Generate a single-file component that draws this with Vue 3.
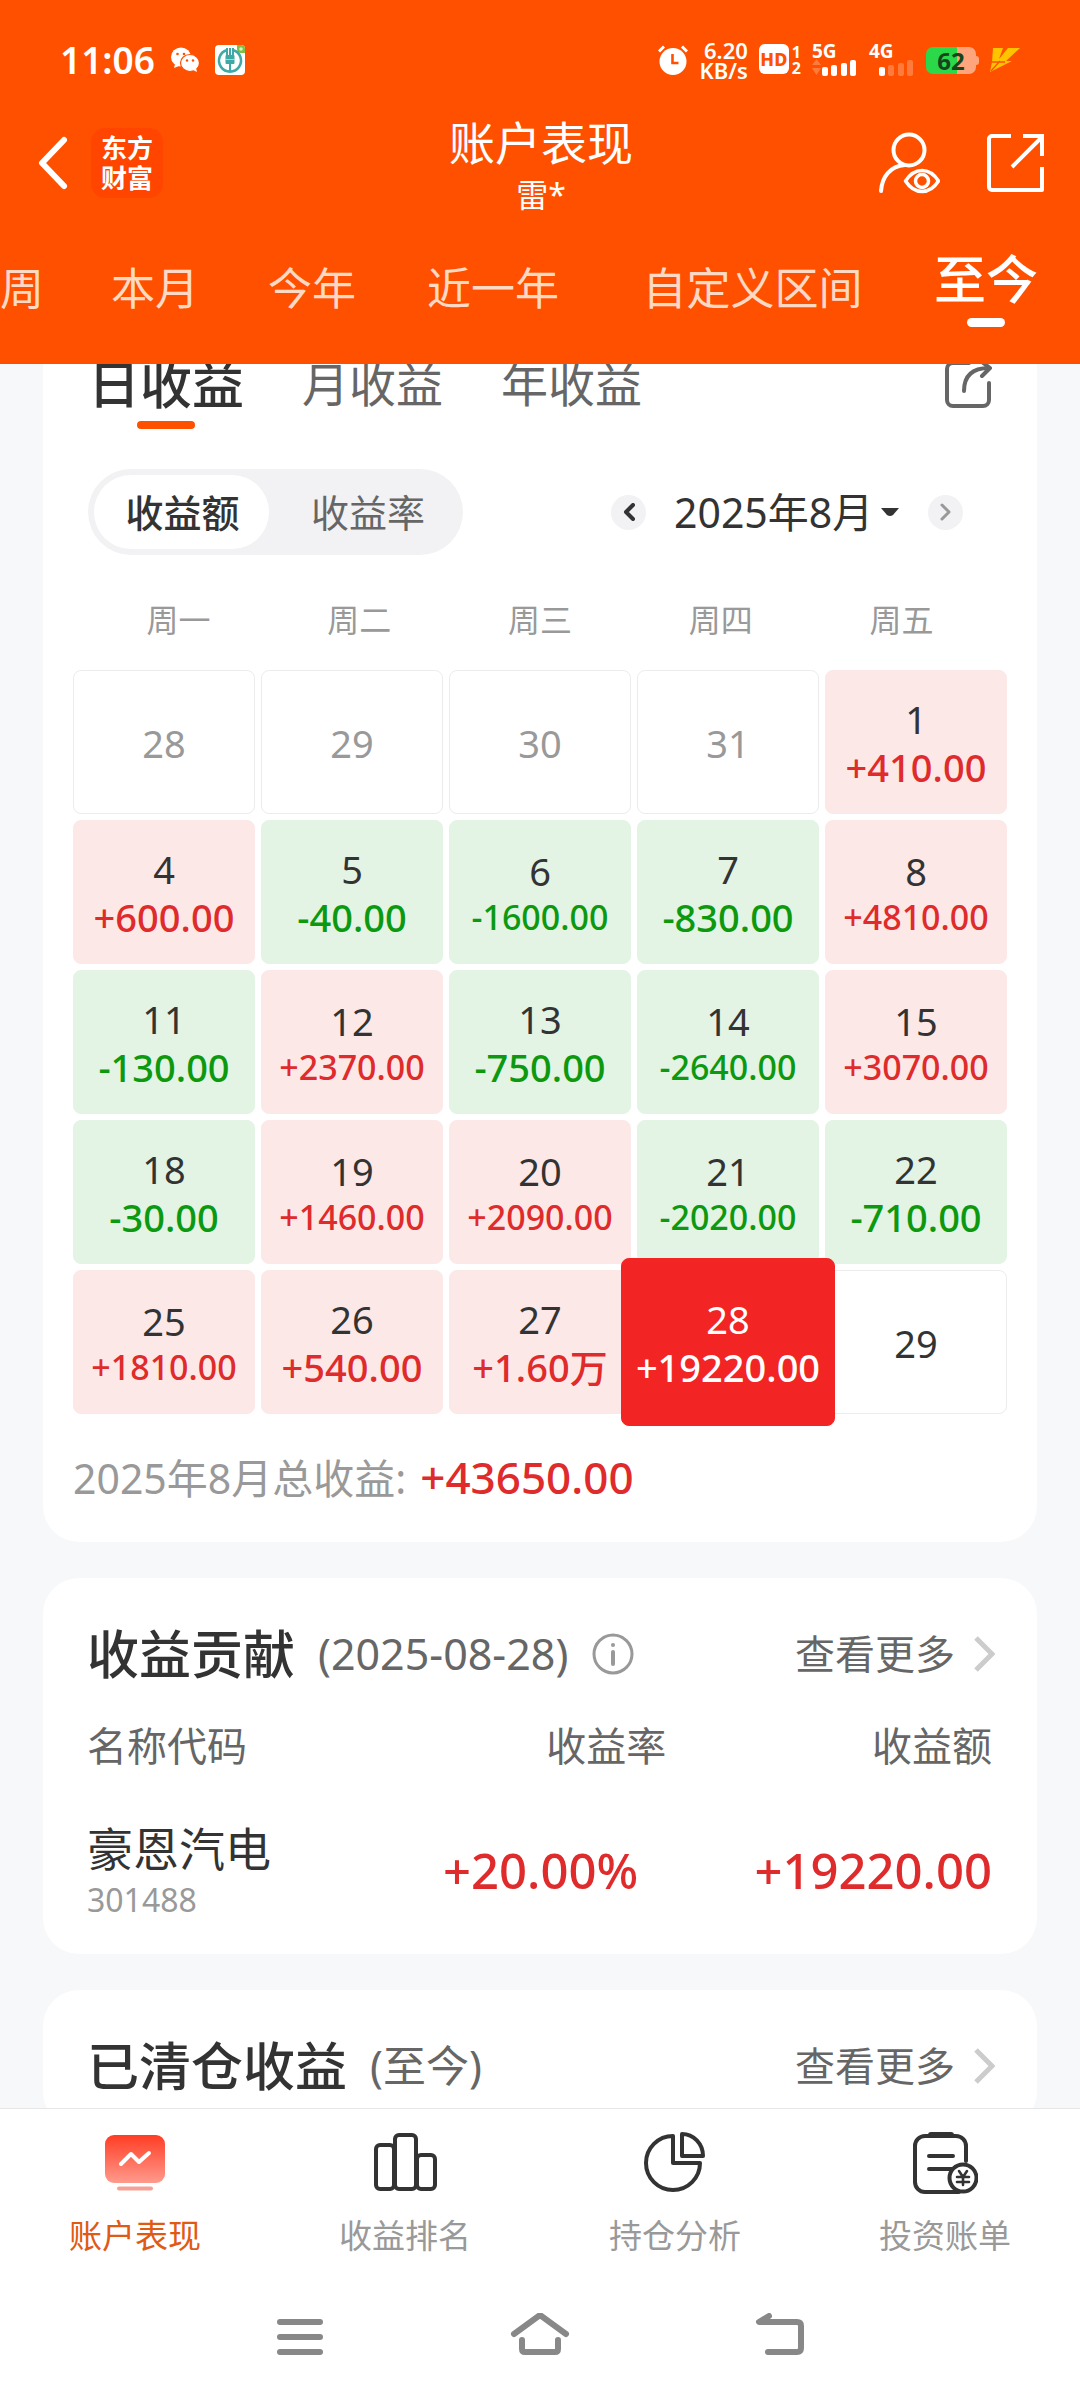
<script setup>
import { ref } from 'vue'

const ranges = ['周', '本月', '今年', '近一年', '自定义区间', '至今']
const activeRange = ref('至今')

const profitTabs = ['日收益', '月收益', '年收益']
const activeProfit = ref('日收益')

const modes = ['收益额', '收益率']
const activeMode = ref('收益额')

const month = ref('2025年8月')
const weekdays = ['周一', '周二', '周三', '周四', '周五']

const days = [
  { day: 28, muted: true },
  { day: 29, muted: true },
  { day: 30, muted: true },
  { day: 31, muted: true },
  { day: 1, amount: '+410.00' },
  { day: 4, amount: '+600.00' },
  { day: 5, amount: '-40.00' },
  { day: 6, amount: '-1600.00' },
  { day: 7, amount: '-830.00' },
  { day: 8, amount: '+4810.00' },
  { day: 11, amount: '-130.00' },
  { day: 12, amount: '+2370.00' },
  { day: 13, amount: '-750.00' },
  { day: 14, amount: '-2640.00' },
  { day: 15, amount: '+3070.00' },
  { day: 18, amount: '-30.00' },
  { day: 19, amount: '+1460.00' },
  { day: 20, amount: '+2090.00' },
  { day: 21, amount: '-2020.00' },
  { day: 22, amount: '-710.00' },
  { day: 25, amount: '+1810.00' },
  { day: 26, amount: '+540.00' },
  { day: 27, amount: '+1.60万' },
  { day: 28, amount: '+19220.00', selected: true },
  { day: 29 },
]

function cellClass(d) {
  return {
    muted: d.muted,
    gain: d.amount?.startsWith('+'),
    loss: d.amount?.startsWith('-'),
    compact: d.amount?.length === 8,
    selected: d.selected,
  }
}

const navItems = [
  { label: '账户表现', icon: 'chart', active: true },
  { label: '收益排名', icon: 'rank' },
  { label: '持仓分析', icon: 'pie' },
  { label: '投资账单', icon: 'bill' },
]
</script>

<template>
  <div class="screen">
    <header class="top">
      <div class="status">
        <div class="status-left">
          <span class="clock">11:06</span>
          <svg width="28" height="26" viewBox="0 0 28 26" aria-hidden="true">
            <ellipse cx="10" cy="10" rx="10" ry="9.5" fill="#fff" />
            <path d="M4 17l-1 4 5-2z" fill="#fff" />
            <ellipse cx="19" cy="16" rx="9.5" ry="8.5" fill="#fff" stroke="#ff5000" stroke-width="1.2" />
            <path d="M22 23l4 2-1-4z" fill="#fff" />
            <g fill="#ff5000">
              <circle cx="6.500" cy="7" r="1.300" /><circle cx="13" cy="7" r="1.300" />
              <circle cx="16" cy="13.500" r="1.200" /><circle cx="22" cy="13.500" r="1.200" />
            </g>
          </svg>
          <svg width="30" height="30" viewBox="0 0 30 30" aria-hidden="true">
            <rect width="30" height="30" rx="4" fill="#fff" />
            <path d="M22 0h4a4 4 0 0 1 4 4v4h-4a4 4 0 0 1-4-4z" fill="#7bc143" />
            <circle cx="26" cy="4" r="1.800" fill="#d9f0c4" />
            <path d="M12 5a11 11 0 1 0 6 0" fill="none" stroke="#3fa9a5" stroke-width="2.600" />
            <path d="M12 3v8h6V3M15 3v23" fill="none" stroke="#3fa9a5" stroke-width="2" />
            <rect x="10.500" y="10" width="9" height="9" rx="1" fill="#3fa9a5" />
            <path d="M10.500 14.500h9" stroke="#bfe6e2" stroke-width="0.800" />
          </svg>
        </div>
        <div class="status-right">
          <svg width="30" height="30" viewBox="0 0 30 30" aria-hidden="true">
            <circle cx="15" cy="16.500" r="13.500" fill="#fff" />
            <path d="M1 6.500l5-5M29 6.500l-5-5" stroke="#fff" stroke-width="3" />
            <path d="M14.500 9v9h6" fill="none" stroke="#ff5000" stroke-width="2.600" />
          </svg>
          <div class="speed"><span>6.20</span><span>KB/s</span></div>
          <div class="hd"><span class="hd-box">HD</span><span class="hd-sim"><i>1</i><i>2</i></span></div>
          <div class="signal">
            <span>5G</span>
            <svg width="46" height="17" viewBox="0 0 46 17" aria-hidden="true">
              <path d="M0 6l4.500-6L9 6zM0 9h9l-4.500 7z" fill="#ff7a3d" />
              <g fill="#fff">
                <rect x="10" y="8" width="6" height="9" rx="2" /><rect x="19" y="6" width="6" height="11" rx="2" />
                <rect x="29" y="4" width="6" height="13" rx="2" /><rect x="38" y="1" width="6" height="16" rx="2" />
              </g>
            </svg>
          </div>
          <div class="signal">
            <span>4G</span>
            <svg width="46" height="17" viewBox="0 0 46 17" aria-hidden="true">
              <rect x="10" y="8" width="6" height="9" rx="2" fill="#fff" />
              <g fill="#ff7a3d">
                <rect x="19" y="6" width="6" height="11" rx="2" /><rect x="29" y="4" width="6" height="13" rx="2" />
                <rect x="38" y="1" width="6" height="16" rx="2" />
              </g>
            </svg>
          </div>
          <div class="battery"><span>62</span></div>
          <svg width="30" height="26" viewBox="0 0 30 26" aria-hidden="true">
            <path d="M3 1h10L9 12l9-11h12L16 14h6L0 25l2-10z" fill="#ffc400" />
            <path d="M2 15h13M1 24l9-10" stroke="#ff5000" stroke-width="1.300" />
          </svg>
        </div>
      </div>

      <div class="nav">
        <div class="nav-left">
          <button class="icon-btn" aria-label="返回">
            <svg width="32" height="56" viewBox="0 0 32 56"><path d="M27 5L5 28l22 23" fill="none" stroke="#fff" stroke-width="6" stroke-linecap="round" stroke-linejoin="round" /></svg>
          </button>
          <div class="logo"><span>东方</span><span>财富</span></div>
        </div>
        <div class="title">
          <h1>账户表现</h1>
          <p>雷*</p>
        </div>
        <div class="nav-right">
          <button class="icon-btn" aria-label="账户查看">
            <svg width="62" height="62" viewBox="0 0 62 62" fill="none" stroke="#fff" stroke-width="4" stroke-linecap="round">
              <circle cx="31" cy="18" r="15.500" />
              <path d="M3 59C4 45 12 34 27 33" />
              <path d="M27.500 49c9-14 24-14 33 0c-9 14-24 14-33 0z" stroke-width="3.500" stroke-linejoin="round" />
              <circle cx="44" cy="49" r="6.500" stroke-width="3.500" />
            </svg>
          </button>
          <button class="icon-btn" aria-label="分享">
            <svg width="58" height="58" viewBox="0 0 58 58" fill="none" stroke="#fff" stroke-width="4">
              <path d="M24 2H5a3 3 0 0 0-3 3v48a3 3 0 0 0 3 3h50V33" stroke-linejoin="round" />
              <path d="M36 2h19v20M25 33L55 3" />
            </svg>
          </button>
        </div>
      </div>

      <nav class="ranges">
        <button
          v-for="r in ranges"
          :key="r"
          class="range"
          :class="{ active: r === activeRange }"
          @click="activeRange = r"
        >{{ r }}</button>
      </nav>
    </header>

    <main class="content">
      <section class="card calendar-card">
        <div class="profit-tabs">
          <button
            v-for="t in profitTabs"
            :key="t"
            class="profit-tab"
            :class="{ active: t === activeProfit }"
            @click="activeProfit = t"
          >{{ t }}</button>
          <button class="icon-btn share" aria-label="分享收益">
            <svg width="48" height="48" viewBox="0 0 48 48" fill="none" stroke="#666" stroke-width="4" stroke-linecap="round" stroke-linejoin="round">
              <path d="M24 2H8a6 6 0 0 0-6 6v31a6 6 0 0 0 6 6h30a6 6 0 0 0 6-6V22" />
              <path d="M19 30C19 15 27 7 44 7M37 1l8 6-8 8" />
            </svg>
          </button>
        </div>

        <div class="controls">
          <div class="segment">
            <button
              v-for="m in modes"
              :key="m"
              :class="{ active: m === activeMode }"
              @click="activeMode = m"
            >{{ m }}</button>
          </div>
          <div class="month">
            <button class="step" aria-label="上个月">
              <svg width="12" height="18" viewBox="0 0 12 18"><path d="M10 2L3 9l7 7" fill="none" stroke="#333" stroke-width="4" stroke-linecap="round" stroke-linejoin="round" /></svg>
            </button>
            <label class="month-pick">
              <select v-model="month" aria-label="月份"><option>2025年8月</option></select>
              <svg width="20" height="10" viewBox="0 0 20 10"><path d="M1 1h18l-6 7q-3 2-6 0z" fill="#333" /></svg>
            </label>
            <button class="step" aria-label="下个月">
              <svg width="12" height="18" viewBox="0 0 12 18"><path d="M2 2l7 7-7 7" fill="none" stroke="#999" stroke-width="3" stroke-linecap="round" stroke-linejoin="round" /></svg>
            </button>
          </div>
        </div>

        <div class="weekdays"><span v-for="w in weekdays" :key="w">{{ w }}</span></div>
        <div class="grid">
          <button v-for="(d, i) in days" :key="i" class="cell" :class="cellClass(d)">
            <span class="face">
              <span class="day">{{ d.day }}</span>
              <span v-if="d.amount" class="amount">{{ d.amount }}</span>
            </span>
          </button>
        </div>
        <p class="total"><span>2025年8月总收益:</span><strong>+43650.00</strong></p>
      </section>

      <section class="card">
        <div class="card-head">
          <h2>收益贡献</h2>
          <span class="sub">(2025-08-28)</span>
          <svg class="info" width="42" height="42" viewBox="0 0 42 42" fill="none" stroke="#999" aria-hidden="true">
            <circle cx="21" cy="21" r="19" stroke-width="3" />
            <path d="M21 19v12" stroke-width="4" stroke-linecap="round" />
            <circle cx="21" cy="12" r="2" fill="#999" stroke="none" />
          </svg>
          <a class="more" href="#">查看更多
            <svg width="22" height="36" viewBox="0 0 22 36"><path d="M3 2l16 16L3 34" fill="none" stroke="#ccc" stroke-width="5" /></svg>
          </a>
        </div>
        <table class="holdings">
          <thead>
            <tr><th>名称代码</th><th>收益率</th><th>收益额</th></tr>
          </thead>
          <tbody>
            <tr>
              <td><span class="name">豪恩汽电</span><span class="code">301488</span></td>
              <td>+20.00%</td>
              <td>+19220.00</td>
            </tr>
          </tbody>
        </table>
      </section>

      <section class="card">
        <div class="card-head">
          <h2>已清仓收益</h2>
          <span class="sub">(至今)</span>
          <a class="more" href="#">查看更多
            <svg width="22" height="36" viewBox="0 0 22 36"><path d="M3 2l16 16L3 34" fill="none" stroke="#ccc" stroke-width="5" /></svg>
          </a>
        </div>
      </section>
    </main>

    <footer class="bottom">
      <nav class="tabbar">
        <a v-for="n in navItems" :key="n.label" href="#" :class="{ active: n.active }">
          <svg width="66" height="66" viewBox="0 0 66 66" fill="none" stroke="#333" stroke-width="4" stroke-linejoin="round" stroke-linecap="round" aria-hidden="true">
            <template v-if="n.icon === 'chart'">
              <defs>
                <linearGradient id="chartFill" x1="0" y1="0" x2="0" y2="1">
                  <stop offset="0" stop-color="#ff3d24" /><stop offset="1" stop-color="#ff9a8c" />
                </linearGradient>
              </defs>
              <rect x="3" y="5" width="60" height="48" rx="9" fill="url(#chartFill)" stroke="none" />
              <path d="M19 34l10-10 8 8 10-9" stroke="#fff" stroke-width="4" />
              <path d="M17 58.500h32" stroke="#f5a196" />
            </template>
            <template v-else-if="n.icon === 'rank'">
              <rect x="4" y="15" width="18" height="44" rx="4" />
              <rect x="23" y="5" width="21" height="54" rx="4" />
              <rect x="45" y="25" width="18" height="34" rx="4" />
            </template>
            <template v-else-if="n.icon === 'pie'">
              <path d="M31 6A27 27 0 1 0 58 33H31z" />
              <path d="M40 4v22h21A21 22 0 0 0 40 4z" />
            </template>
            <template v-else>
              <path d="M54 31V16a10 10 0 0 0-10-10H13A10 10 0 0 0 3 16v36a10 10 0 0 0 10 10h34" />
              <path d="M19 5h20" stroke-width="6" />
              <path d="M17 26h24M17 39h23" />
              <circle cx="51" cy="48" r="13.500" fill="#fff" />
              <path d="M47 41l4 6 4-6M51 47v8M45 47h12M45 52h12" stroke-width="2.600" />
            </template>
          </svg>
          <span>{{ n.label }}</span>
        </a>
      </nav>
      <div class="system">
        <button aria-label="最近任务">
          <svg width="60" height="48" viewBox="0 0 60 48"><path d="M10 9h40M10 24h40M10 39h40" stroke="#888" stroke-width="6" stroke-linecap="round" /></svg>
        </button>
        <button aria-label="主页">
          <svg width="60" height="48" viewBox="0 0 60 48" fill="none" stroke="#888" stroke-width="6" stroke-linecap="round" stroke-linejoin="round"><path d="M4 21L30 2l26 19M12 27v9q0 3 3 3h30q3 0 3-3v-9" /></svg>
        </button>
        <button aria-label="返回上一级">
          <svg width="60" height="48" viewBox="0 0 60 48" fill="none" stroke="#888" stroke-width="6" stroke-linecap="round" stroke-linejoin="round"><path d="M19 3L9 9h38q4 0 4 4v22q0 4-4 4H18" /></svg>
        </button>
      </div>
    </footer>
  </div>
</template>

<style>
body {
  background: #f7f8fa;
}
</style>

<style scoped>
* {
  box-sizing: border-box;
  margin: 0;
}

.screen {
  display: flex;
  flex-direction: column;
  height: 100vh;
  font-family: "Noto Sans", "Noto Sans CJK SC", sans-serif;
  color: #333;
}

button,
select {
  font: inherit;
  color: inherit;
  background: none;
  border: 0;
  padding: 0;
}

svg {
  display: block;
  flex: none;
}

a {
  color: inherit;
  text-decoration: none;
}

.top {
  flex: none;
  background: #ff5000;
  color: #fff;
}

.status {
  display: flex;
  justify-content: space-between;
  align-items: center;
  height: 104px;
  padding: 16px 60px 0;
}

.status-left,
.status-right {
  display: flex;
  align-items: center;
}

.status-left {
  gap: 16px;
}

.clock {
  font-size: 37px;
  line-height: 40px;
  font-weight: 600;
}

.status-right {
  gap: 11px;
}

.speed {
  display: flex;
  flex-direction: column;
  align-items: flex-end;
  font-size: 22px;
  line-height: 20px;
  font-weight: 600;
}

.hd {
  display: flex;
  gap: 3px;
}

.hd-box {
  width: 30px;
  height: 30px;
  border-radius: 6px;
  background: #fff;
  color: #ff5000;
  font-size: 18px;
  line-height: 30px;
  font-weight: 800;
  text-align: center;
}

.hd-sim {
  display: flex;
  flex-direction: column;
  font-size: 16px;
  line-height: 16px;
  font-weight: 700;
}

.hd-sim i {
  font-style: normal;
}

.signal {
  display: flex;
  flex-direction: column;
  font-size: 19px;
  line-height: 15px;
  font-weight: 700;
}

.battery {
  position: relative;
  width: 50px;
  height: 27px;
  margin-right: 3px;
  border-radius: 7px;
  background: linear-gradient(90deg, #2bd84a 62%, #ffa57d 62%);
  color: #16451c;
  font-size: 24px;
  line-height: 27px;
  font-weight: 700;
  text-align: center;
}

.battery::after {
  content: "";
  position: absolute;
  left: 100%;
  top: 9px;
  width: 3px;
  height: 9px;
  border-radius: 0 3px 3px 0;
  background: #ffa57d;
}

.nav {
  display: grid;
  grid-template-columns: 1fr auto 1fr;
  align-items: center;
  height: 118px;
  padding: 0 35px 0 37px;
}

.nav-left,
.nav-right {
  display: flex;
  align-items: center;
}

.nav-left {
  gap: 22px;
}

.nav-right {
  justify-content: flex-end;
  gap: 47px;
}

.logo {
  display: flex;
  flex-direction: column;
  justify-content: center;
  width: 72px;
  height: 70px;
  border-radius: 14px;
  background: #ff4500;
  font-size: 26px;
  line-height: 30px;
  font-weight: 700;
  text-align: center;
}

.title {
  text-align: center;
}

.title h1 {
  font-size: 46px;
  line-height: 64px;
  font-weight: 400;
}

.title p {
  font-size: 32px;
  line-height: 42px;
}

.ranges {
  display: grid;
  grid-template-columns: 77fr 156fr 158fr 204fr 315fr 152fr 18fr;
  align-items: center;
  height: 142px;
  padding-bottom: 10px;
  font-size: 44px;
  line-height: 60px;
  color: #ffd9c4;
  white-space: nowrap;
}

.range:first-child {
  justify-self: start;
}

.range.active {
  display: flex;
  flex-direction: column;
  align-items: center;
  gap: 9px;
  font-size: 52px;
  font-weight: 500;
  color: #fff;
}

.range.active::after {
  content: "";
  width: 38px;
  height: 9px;
  border-radius: 5px;
  background: #fff;
}

.content {
  flex: 1;
  min-height: 0;
  overflow-y: auto;
  scrollbar-width: none;
  background: #f7f8fa;
}

.card {
  margin: 0 43px 36px;
  padding: 46px 45px 32px 44px;
  border-radius: 36px;
  background: #fff;
}

.calendar-card {
  margin-top: -40px;
  padding: 30px 30px 34px;
}

.profit-tabs {
  display: flex;
  align-items: flex-start;
  gap: 58px;
  padding: 0 14px 40px 15px;
}

.profit-tab {
  display: flex;
  flex-direction: column;
  align-items: center;
  gap: 7px;
  font-size: 47px;
  line-height: 60px;
  color: #666;
}

.profit-tab.active {
  font-size: 52px;
  font-weight: 500;
  color: #333;
}

.profit-tab.active::after {
  content: "";
  width: 58px;
  height: 8px;
  border-radius: 4px;
  background: #ff5000;
}

.share {
  margin: 7px 0 0 auto;
}

.controls {
  display: flex;
  justify-content: space-between;
  align-items: center;
  padding: 0 44px 0 15px;
}

.segment {
  display: flex;
  padding: 6px 0 6px 6px;
  border-radius: 43px;
  background: #f2f2f4;
  font-size: 38px;
  line-height: 74px;
  color: #666;
}

.segment button {
  width: 194px;
  padding-left: 4px;
}

.segment .active {
  width: 175px;
  padding-left: 2px;
  border-radius: 37px;
  background: #fff;
  color: #333;
  font-weight: 500;
}

.month {
  display: flex;
  align-items: center;
  gap: 28px;
}

.step {
  display: grid;
  place-items: center;
  width: 35px;
  height: 35px;
  border-radius: 50%;
  background: #f2f2f4;
}

.month-pick {
  display: flex;
  align-items: center;
  gap: 6px;
}

.month-pick select {
  appearance: none;
  font-size: 41px;
  line-height: 60px;
}

.weekdays {
  display: grid;
  grid-template-columns: repeat(5, 1fr);
  padding: 42px 15px 27px;
  font-size: 32px;
  line-height: 46px;
  color: #999;
  text-align: center;
}

.grid {
  display: grid;
  grid-template-columns: repeat(5, minmax(0, 1fr));
  grid-auto-rows: 144px;
  gap: 6px;
}

.cell {
  position: relative;
}

.face {
  display: flex;
  flex-direction: column;
  justify-content: center;
  align-items: center;
  height: 100%;
  padding-top: 2px;
  border: 1px solid #ececec;
  border-radius: 8px;
  background: #fff;
  font-size: 38px;
  line-height: 48px;
  white-space: nowrap;
}

.muted .face {
  color: #999;
}

.gain .face {
  border-color: #fde8e8;
  background: #fde8e8;
}

.loss .face {
  border-color: #e3f4e5;
  background: #e3f4e5;
}

.amount {
  font-weight: 500;
}

.gain .amount {
  color: #df2b2b;
}

.loss .amount {
  color: #0c990f;
}

.compact .amount {
  font-size: 34px;
  line-height: 44px;
}

.selected {
  z-index: 1;
}

.selected .face {
  position: absolute;
  inset: -12px -16px;
  height: auto;
  border-color: #f32424;
  background: #f32424;
  color: #fff;
}

.gain.selected .amount {
  color: #fff;
}

.total {
  display: flex;
  align-items: baseline;
  gap: 14px;
  padding-top: 33px;
  font-size: 41px;
  line-height: 60px;
  color: #999;
}

.total strong {
  font-size: 44px;
  font-weight: 500;
  color: #df2b2b;
}

.card-head {
  display: flex;
  align-items: center;
  line-height: 60px;
}

.card-head h2 {
  font-size: 52px;
  font-weight: 500;
}

.sub {
  margin-left: 23px;
  font-size: 43px;
  color: #666;
}

.info {
  margin-left: 24px;
}

.more {
  display: flex;
  align-items: center;
  gap: 18px;
  margin: 0 -3px 0 auto;
  font-size: 40px;
  color: #666;
}

.holdings {
  width: 100%;
  margin-top: 32px;
  border-collapse: collapse;
  table-layout: fixed;
}

.holdings th {
  padding: 0;
  font-size: 40px;
  line-height: 60px;
  font-weight: 400;
  color: #666;
  text-align: right;
}

.holdings th:first-child,
.holdings td:first-child {
  text-align: left;
}

.holdings th:nth-child(2) {
  width: 36%;
}

.holdings th:nth-child(3) {
  width: 36%;
}

.holdings td {
  padding: 42px 0 0;
  font-size: 49px;
  line-height: 60px;
  font-weight: 500;
  color: #df2b2b;
  text-align: right;
}

.holdings td:nth-child(2) {
  padding-right: 28px;
}

.name,
.code {
  display: block;
  font-weight: 400;
}

.name {
  font-size: 46px;
  color: #333;
}

.code {
  font-size: 32px;
  line-height: 44px;
  color: #999;
}

.bottom {
  flex: none;
  border-top: 1px solid #e6e6e6;
  background: #fff;
}

.tabbar {
  display: grid;
  grid-template-columns: repeat(4, 1fr);
  padding-top: 21px;
}

.tabbar a {
  display: flex;
  flex-direction: column;
  align-items: center;
  gap: 17px;
  font-size: 33px;
  line-height: 46px;
  color: #999;
}

.tabbar .active {
  color: #e05a14;
}

.system {
  display: flex;
  justify-content: center;
  gap: 180px;
  padding: 54px 0 39px;
}
</style>
